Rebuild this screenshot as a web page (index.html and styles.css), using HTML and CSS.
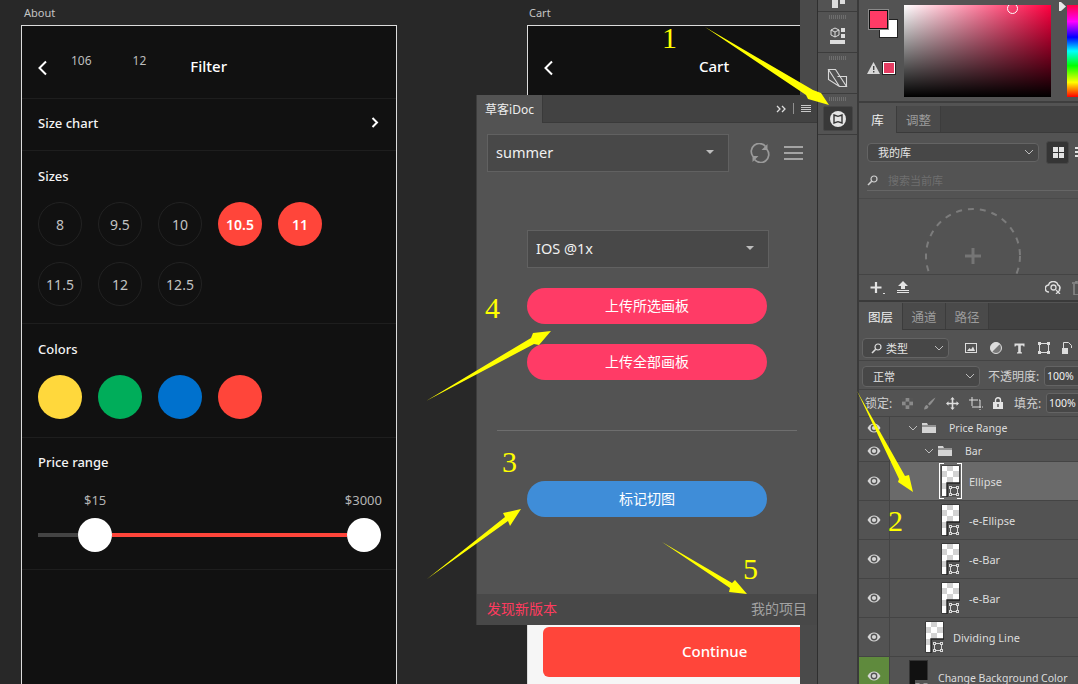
FILE: index.html
```html
<!DOCTYPE html>
<html lang="zh-CN">
<head>
  <meta charset="UTF-8">
  <title>草客iDoc</title>
  <link rel="stylesheet" href="styles.css">
</head>
<body>
  <svg class="defs" width="0" height="0">
    <symbol id="thumb" viewBox="0 0 19 32">
      <rect x="0.5" y="0.5" width="18" height="31" fill="#222"/>
      <rect x="1" y="1" width="17" height="30" fill="#fff"/>
      <g fill="#d2d2d2">
        <rect x="6" y="1" width="6" height="5"/><rect x="12" y="6" width="6" height="6"/>
        <rect x="1" y="6" width="5" height="6"/><rect x="6" y="12" width="6" height="6"/>
        <rect x="1" y="18" width="5" height="6"/>
      </g>
      <rect x="6" y="18" width="13" height="14" fill="#535353"/>
      <path d="M6 32V18h13" fill="none" stroke="#222" stroke-width="1.4"/>
      <rect x="9.5" y="22.5" width="7" height="7" fill="none" stroke="#d8d8d8"/>
      <g fill="#535353" stroke="#d8d8d8">
        <rect x="8.5" y="21.5" width="2" height="2"/><rect x="15.5" y="21.5" width="2" height="2"/>
        <rect x="8.5" y="28.5" width="2" height="2"/><rect x="15.5" y="28.5" width="2" height="2"/>
      </g>
    </symbol>
    <symbol id="eye" viewBox="0 0 14 10">
      <path d="M0.5 5C2.5 1.8 4.6 0.6 7 0.6S11.5 1.8 13.5 5C11.5 8.2 9.4 9.4 7 9.4S2.5 8.2 0.5 5Z" fill="#d6d6d6"/>
      <circle cx="7" cy="5" r="3.4" fill="#535353"/>
      <circle cx="7" cy="5" r="2.1" fill="#d6d6d6"/>
    </symbol>
    <symbol id="folder" viewBox="0 0 14 10">
      <path d="M0 0h5l1 2h8v8H0Z" fill="#d4d4d4"/>
      <rect x="0" y="2.5" width="14" height="1" fill="#535353"/>
    </symbol>
    <symbol id="vee" viewBox="0 0 10 6">
      <path d="M1 1l4 4 4-4" fill="none" stroke="#bdbdbd"/>
    </symbol>
  </svg>

  <div class="app">
    <main class="canvas">
      <div class="board-label label-about">About</div>
      <section class="board board-filter">
        <header class="filter-head">
          <svg class="back" width="11" height="16" viewBox="0 0 11 16"><path d="M9 1.5L2.5 8 9 14.5" fill="none" stroke="#fff" stroke-width="2"/></svg>
          <span class="measure measure-w">106</span>
          <span class="measure measure-h">12</span>
          <span class="head-title">Filter</span>
        </header>
        <div class="row-chart">
          <span class="sec-title">Size chart</span>
          <svg width="8" height="11" viewBox="0 0 8 11"><path d="M1.5 1L6 5.5 1.5 10" fill="none" stroke="#fff" stroke-width="2"/></svg>
        </div>
        <div class="sec sec-sizes">
          <div class="sec-title">Sizes</div>
          <div class="size-grid">
            <span class="size">8</span>
            <span class="size">9.5</span>
            <span class="size">10</span>
            <span class="size on">10.5</span>
            <span class="size on">11</span>
            <span class="size">11.5</span>
            <span class="size">12</span>
            <span class="size">12.5</span>
          </div>
        </div>
        <div class="sec sec-colors">
          <div class="sec-title">Colors</div>
          <div class="color-row">
            <span class="dot dot-yellow"></span>
            <span class="dot dot-green"></span>
            <span class="dot dot-blue"></span>
            <span class="dot dot-red"></span>
          </div>
        </div>
        <div class="sec sec-price">
          <div class="sec-title">Price range</div>
          <div class="price-labels"><span>$15</span><span>$3000</span></div>
          <div class="slider">
            <i class="track-off"></i>
            <b class="thumb"></b>
            <i class="track-on"></i>
            <b class="thumb"></b>
          </div>
        </div>
      </section>

      <div class="board-label label-cart">Cart</div>
      <section class="board board-cart">
        <header class="cart-head">
          <svg class="back" width="11" height="16" viewBox="0 0 11 16"><path d="M9 1.5L2.5 8 9 14.5" fill="none" stroke="#fff" stroke-width="2"/></svg>
          <span class="cart-title">Cart</span>
        </header>
        <footer class="cart-foot"><div class="continue"><span>Continue</span></div></footer>
      </section>
    </main>

    <div class="gutter"></div>

    <aside class="dock">
      <div class="dock-cell dock-a">
        <svg width="16" height="9" viewBox="0 0 16 9"><rect x="2" width="6" height="8" fill="#ddd"/><rect x="10" width="5" height="4" fill="#ddd"/></svg>
      </div>
      <div class="dock-cell">
        <i class="grip"></i>
        <svg width="16" height="17" viewBox="0 0 16 17">
          <path d="M5 1l4 2v5l-4 2-4-2V3Z" fill="none" stroke="#ddd"/><path d="M1 3l4 2 4-2M5 5v5" fill="none" stroke="#ddd"/>
          <rect x="11" y="1" width="4" height="4" fill="#ddd"/><rect x="11" y="7" width="4" height="4" fill="#ddd"/>
          <rect x="0" y="13" width="15" height="4" fill="#ddd"/>
        </svg>
      </div>
      <div class="dock-cell">
        <i class="grip"></i>
        <svg width="21" height="20" viewBox="0 0 21 20"><path d="M1.5 1.5h7l11 17h-7ZM1.5 1.5v10l11 7M10.5 8.5h9v10" fill="none" stroke="#d8d8d8" stroke-width="1.1"/></svg>
      </div>
      <div class="dock-cell dock-active">
        <i class="grip"></i>
        <div class="idoc-btn">
          <svg width="16" height="16" viewBox="0 0 16 16"><circle cx="8" cy="8" r="8" fill="#e4e4e4"/><path d="M4 4l4 1.3L12 4v8l-4-1.3L4 12Z" fill="none" stroke="#333" stroke-width="1.4"/></svg>
        </div>
      </div>
    </aside>

    <div class="panels">
      <section class="color-panel">
        <div class="swatches">
          <i class="swatch-bg"></i>
          <i class="swatch-fg"></i>
          <svg class="warn" width="13" height="12" viewBox="0 0 13 12"><path d="M6.5 0L13 12H0Z" fill="#d8d8d8"/><rect x="6" y="4" width="1.4" height="4" fill="#444"/><rect x="6" y="9" width="1.4" height="1.5" fill="#444"/></svg>
          <i class="swatch-web"></i>
        </div>
        <div class="picker"><i class="picker-ring"></i></div>
        <div class="hue-wrap">
          <svg class="hue-arrow" width="7" height="9" viewBox="0 0 7 9"><path d="M0 0h2l5 4.5L2 9H0Z" fill="#e8e8e8"/></svg>
          <div class="hue"></div>
        </div>
      </section>

      <section class="lib-panel">
        <div class="tabs">
          <span class="tab tab-on">库</span>
          <span class="tab tab-w">调整</span>
        </div>
        <div class="lib-tools">
          <div class="ps-select lib-select"><span>我的库</span><svg width="10" height="6"><use href="#vee"/></svg></div>
          <div class="grid-btn"><i></i><i></i><i></i><i></i></div>
          <div class="list-btn"><i></i><i></i><i></i></div>
        </div>
        <div class="lib-search">
          <svg width="11" height="11" viewBox="0 0 11 11"><circle cx="7" cy="4" r="3" fill="none" stroke="#cfcfcf" stroke-width="1.2"/><path d="M4.7 6.3L1 10" stroke="#cfcfcf" stroke-width="1.6"/></svg>
          <span>搜索当前库</span>
        </div>
        <div class="lib-empty">
          <svg width="100" height="67" viewBox="0 0 100 67">
            <circle cx="50" cy="49" r="47" fill="none" stroke="#7c7c7c" stroke-width="2" stroke-dasharray="6 6"/>
            <path d="M50 41v16M42 49h16" stroke="#757575" stroke-width="3"/>
          </svg>
        </div>
        <div class="lib-foot">
          <svg width="16" height="14" viewBox="0 0 16 14"><path d="M6 1v11M0.5 6.5h11" stroke="#e4e4e4" stroke-width="2.2"/><rect x="13" y="12" width="2" height="1" fill="#ddd"/></svg>
          <svg width="14" height="13" viewBox="0 0 14 13"><path d="M7 0l5 5H9v3H5V5H2Z" fill="#e4e4e4"/><rect x="1" y="9" width="12" height="1" fill="#e4e4e4"/><rect x="1" y="11" width="12" height="1" fill="#e4e4e4"/></svg>
          <span class="spacer"></span>
          <svg width="17" height="13" viewBox="0 0 17 13"><path d="M4 11a3.5 3.5 0 0 1-.5-7A5 5 0 0 1 13 4a3 3 0 0 1 1 5" fill="none" stroke="#ddd" stroke-width="1.6"/><circle cx="8.5" cy="6.5" r="2.5" fill="none" stroke="#ddd" stroke-width="1.3"/><path d="M11 9l4 4M15 9l-4 4" stroke="#ddd" stroke-width="1.3"/></svg>
          <svg class="trash" width="13" height="14" viewBox="0 0 13 14"><path d="M0 2h13M4 2V0h5v2M2 3v11h9V3" fill="none" stroke="#8a8a8a" stroke-width="1.5"/></svg>
        </div>
      </section>

      <section class="layer-panel">
        <div class="tabs">
          <span class="tab tab-on tab-l">图层</span>
          <span class="tab tab-l2">通道</span>
          <span class="tab tab-l2">路径</span>
        </div>
        <div class="layer-tools tools-filter">
          <div class="ps-select filter-select">
            <svg width="11" height="11" viewBox="0 0 11 11"><circle cx="7" cy="4" r="3" fill="none" stroke="#dcdcdc" stroke-width="1.2"/><path d="M4.7 6.3L1 10" stroke="#dcdcdc" stroke-width="1.6"/></svg>
            <span>类型</span>
            <svg class="push" width="10" height="6"><use href="#vee"/></svg>
          </div>
          <div class="filter-icons">
            <svg width="12" height="10" viewBox="0 0 12 10"><rect x="0.5" y="0.5" width="11" height="9" fill="none" stroke="#ddd"/><path d="M2 8l2.5-3 1.5 1.5 2-3 2 4.5Z" fill="#ddd"/></svg>
            <svg width="12" height="12" viewBox="0 0 12 12"><circle cx="6" cy="6" r="5.5" fill="#777" stroke="#ddd"/><path d="M10 2L2 10A5.5 5.500 0 0 1 10 2Z" fill="#ddd"/></svg>
            <svg width="11" height="11" viewBox="0 0 11 11"><path d="M0.5 0.5h10v3h-1l-.5-1H6.8v6.5l1.2.5v1H3v-1l1.2-.5V2.5H2l-.5 1h-1Z" fill="#ddd"/></svg>
            <svg width="12" height="12" viewBox="0 0 12 12"><path d="M1.5 1.5h9v9h-9Z" fill="none" stroke="#ddd"/><g fill="#ddd"><rect width="3" height="3"/><rect x="9" width="3" height="3"/><rect y="9" width="3" height="3"/><rect x="9" y="9" width="3" height="3"/></g></svg>
            <svg width="11" height="12" viewBox="0 0 11 12"><path d="M1.5 11V.5h5l3 3V6" fill="none" stroke="#ddd"/><rect x="0" y="6" width="6" height="6" fill="#ddd"/></svg>
          </div>
        </div>
        <div class="layer-tools tools-blend">
          <div class="ps-select blend-select"><span>正常</span><svg class="push" width="10" height="6"><use href="#vee"/></svg></div>
          <span class="tool-label opacity-label">不透明度:</span>
          <span class="pct">100%</span>
        </div>
        <div class="layer-tools tools-lock">
          <span class="tool-label lock-label">锁定:</span>
          <div class="lock-icons">
            <svg width="11" height="11" viewBox="0 0 11 11"><rect width="11" height="11" fill="#8a8a8a"/><g fill="#555"><rect x="0" y="0" width="3.6" height="3.6"/><rect x="7.3" y="0" width="3.7" height="3.6"/><rect x="3.6" y="3.6" width="3.7" height="3.7"/><rect x="0" y="7.3" width="3.6" height="3.7"/><rect x="7.3" y="7.3" width="3.7" height="3.7"/></g></svg>
            <svg width="13" height="13" viewBox="0 0 13 13"><path d="M12.5.5C10 2 6.5 5 5 7l1.500 1.500C8.500 7 11 3.500 12.500.5ZM4 8C2.500 8 1.500 9.500 1 12.500 3 12.500 5.500 11.500 5.500 9.500Z" fill="#8f8f8f"/></svg>
            <svg width="13" height="13" viewBox="0 0 13 13"><path d="M6.5 0l2.2 2.5H7.3v3.2h3.200V4.300L13 6.500l-2.500 2.200V7.300H7.300v3.200h1.400L6.500 13l-2.200-2.500h1.400V7.300H2.500v1.400L0 6.500l2.500-2.200v1.400h3.200V2.500H4.300Z" fill="#ddd"/></svg>
            <svg width="14" height="13" viewBox="0 0 14 13"><path d="M3 0v10h11M0 3h11v10" fill="none" stroke="#ddd" stroke-dasharray="9 1"/></svg>
            <svg width="10" height="12" viewBox="0 0 10 12"><path d="M2.5 5V3.2a2.5 2.5 0 0 1 5 0V5" fill="none" stroke="#e4e4e4" stroke-width="1.4"/><rect y="5" width="10" height="7" fill="#e4e4e4"/><rect x="4.3" y="7" width="1.4" height="3" fill="#535353"/></svg>
          </div>
          <span class="tool-label fill-label">填充:</span>
          <span class="pct">100%</span>
        </div>

        <div class="layers">
          <div class="layer layer-s">
            <span class="eye-col"><svg width="14" height="10"><use href="#eye"/></svg></span>
            <span class="layer-main ind-1"><svg class="twist" width="10" height="6"><use href="#vee"/></svg><svg width="14" height="10"><use href="#folder"/></svg><span class="layer-name">Price Range</span></span>
          </div>
          <div class="layer layer-s layer-s2">
            <span class="eye-col"><svg width="14" height="10"><use href="#eye"/></svg></span>
            <span class="layer-main ind-2"><svg class="twist" width="10" height="6"><use href="#vee"/></svg><svg width="14" height="10"><use href="#folder"/></svg><span class="layer-name">Bar</span></span>
          </div>
          <div class="layer layer-on">
            <span class="eye-col"><svg width="14" height="10"><use href="#eye"/></svg></span>
            <span class="layer-main ind-3"><span class="thumb-sel"><svg width="19" height="32"><use href="#thumb"/></svg></span><span class="layer-name">Ellipse</span></span>
          </div>
          <div class="layer">
            <span class="eye-col"><svg width="14" height="10"><use href="#eye"/></svg></span>
            <span class="layer-main ind-3"><svg width="19" height="32"><use href="#thumb"/></svg><span class="layer-name">-e-Ellipse</span></span>
          </div>
          <div class="layer">
            <span class="eye-col"><svg width="14" height="10"><use href="#eye"/></svg></span>
            <span class="layer-main ind-3"><svg width="19" height="32"><use href="#thumb"/></svg><span class="layer-name">-e-Bar</span></span>
          </div>
          <div class="layer">
            <span class="eye-col"><svg width="14" height="10"><use href="#eye"/></svg></span>
            <span class="layer-main ind-3"><svg width="19" height="32"><use href="#thumb"/></svg><span class="layer-name">-e-Bar</span></span>
          </div>
          <div class="layer">
            <span class="eye-col"><svg width="14" height="10"><use href="#eye"/></svg></span>
            <span class="layer-main ind-4"><svg width="19" height="32"><use href="#thumb"/></svg><span class="layer-name">Dividing Line</span></span>
          </div>
          <div class="layer">
            <span class="eye-col eye-green"><svg width="14" height="10"><use href="#eye"/></svg></span>
            <span class="layer-main ind-5">
              <svg width="19" height="32" viewBox="0 0 19 32"><rect x="0.5" y="0.5" width="18" height="31" fill="#111" stroke="#333"/><rect x="6" y="20" width="13" height="12" fill="#535353"/><path d="M9 26h8" stroke="#ddd"/><rect x="7" y="24" width="3" height="3" fill="#535353" stroke="#ddd"/><rect x="15" y="24" width="3" height="3" fill="#535353" stroke="#ddd"/></svg>
              <span class="layer-name layer-name-bg">Change Background Color</span>
            </span>
          </div>
        </div>
      </section>
    </div>

    <section class="idoc">
      <div class="idoc-tabs">
        <span class="idoc-tab">草客iDoc</span>
        <span class="idoc-more">
          <svg width="10" height="8" viewBox="0 0 10 8"><path d="M1 1l3 3-3 3M6 1l3 3-3 3" fill="none" stroke="#dcdcdc" stroke-width="1.3"/></svg>
          <i class="idoc-sep"></i>
          <svg width="10" height="7" viewBox="0 0 10 7"><path d="M0 .5h10M0 2.5h10M0 4.5h10M0 6.5h10" stroke="#c8c8c8"/></svg>
        </span>
      </div>
      <div class="idoc-body">
        <div class="idoc-top">
          <div class="idoc-select select-project"><span>summer</span><i class="caret"></i></div>
          <svg class="sync" width="20" height="20" viewBox="0 0 20 20"><path d="M3 13.5A8 8 0 0 1 15.5 3.5M17 6.5A8 8 0 0 1 4.5 16.5" fill="none" stroke="#9a9a9a" stroke-width="1.7"/><path d="M17.5 1v6h-6ZM2.5 19v-6h6Z" fill="#9a9a9a"/></svg>
          <svg class="menu" width="19" height="14" viewBox="0 0 19 14"><path d="M0 1h19M0 7h19M0 13h19" stroke="#a4a4a4" stroke-width="2"/></svg>
        </div>
        <div class="idoc-select select-scale"><span>IOS @1x</span><i class="caret"></i></div>
        <div class="pill pill-red">上传所选画板</div>
        <div class="pill pill-red pill-second">上传全部画板</div>
        <hr class="idoc-rule">
        <div class="pill pill-blue">标记切图</div>
      </div>
      <div class="idoc-foot">
        <span class="new-ver">发现新版本</span>
        <span class="my-proj">我的项目</span>
      </div>
    </section>

    <svg class="notes" width="1078" height="684" viewBox="0 0 1078 684">
      <g fill="#ffff00">
        <polygon points="705,27 813,90 821,93 829,105 808,99 806,95"/>
        <polygon points="426,401 531,338 533,333 551,331 539,345 534,344"/>
        <polygon points="427,579 505,517 503,513 521,509 510,526 508,521"/>
        <polygon points="662,542 732,583 735,580 747,594 729,592 730,588"/>
        <polygon points="857,391 905,476 909,475 913,492 898,482 899,479"/>
      </g>
      <g class="note-num">
        <text x="662" y="48">1</text>
        <text x="485" y="318">4</text>
        <text x="502" y="472">3</text>
        <text x="743" y="579">5</text>
        <text x="888" y="531">2</text>
      </g>
    </svg>
  </div>
</body>
</html>
```
FILE: styles.css
```css
body {
  margin: 0;
  background: #282828;
  font-family: "Noto Sans", "Noto Sans CJK SC", sans-serif;
}
.defs {
  position: absolute;
}
.app {
  position: relative;
  display: flex;
  width: 1078px;
  height: 684px;
  overflow: hidden;
}

/* canvas with artboards */
.canvas {
  position: relative;
  flex: none;
  width: 800px;
  height: 684px;
  overflow: hidden;
  background: #282828;
}
.board-label {
  position: absolute;
  top: 5px;
  font-size: 11px;
  line-height: 16px;
  color: #c4c4c4;
}
.label-about {
  left: 24px;
}
.label-cart {
  left: 529px;
}
.board {
  position: absolute;
  top: 25px;
  box-sizing: border-box;
  border: 1px solid #dcdcdc;
  background: #111;
}
.board-filter {
  left: 21px;
  width: 376px;
  height: 700px;
  color: #fff;
}
.filter-head {
  display: flex;
  align-items: center;
  box-sizing: content-box;
  height: 61px;
  padding: 11px 0 0 15px;
  border-bottom: 1px solid #1e1e1e;
}
.back {
  flex: none;
}
.measure {
  align-self: flex-start;
  margin-top: 16px;
  font-size: 12px;
  line-height: 16px;
  color: #bdbdbd;
}
.measure-w {
  margin-left: 23px;
}
.measure-h {
  margin-left: 41px;
}
.head-title {
  margin: -3px 0 0 44px;
  font-size: 15px;
  font-weight: 500;
}
.row-chart {
  display: flex;
  align-items: center;
  justify-content: space-between;
  box-sizing: border-box;
  height: 52px;
  padding: 0 17px 4px 16px;
  border-bottom: 1px solid #1e1e1e;
}
.sec {
  padding: 0 16px;
  border-bottom: 1px solid #1e1e1e;
}
.sec-title {
  font-size: 13px;
  line-height: 18px;
  font-weight: 500;
  color: #f4f4f4;
}
.sec-sizes {
  height: 173px;
  box-sizing: border-box;
  padding-top: 16px;
}
.size-grid {
  display: grid;
  grid-template-columns: repeat(5, 44px);
  gap: 16px;
  margin-top: 17px;
}
.size {
  display: flex;
  align-items: center;
  justify-content: center;
  box-sizing: border-box;
  width: 44px;
  height: 44px;
  border: 1px solid #222;
  border-radius: 50%;
  font-size: 14px;
  color: #c2c2c2;
}
.size.on {
  border: none;
  background: #ff453a;
  color: #fff;
  font-weight: 600;
}
.sec-colors {
  height: 114px;
  box-sizing: border-box;
  padding-top: 16px;
}
.color-row {
  display: flex;
  gap: 16px;
  margin-top: 17px;
}
.dot {
  width: 44px;
  height: 44px;
  border-radius: 50%;
}
.dot-yellow {
  background: #ffd83c;
}
.dot-green {
  background: #00ad5a;
}
.dot-blue {
  background: #0071cd;
}
.dot-red {
  background: #ff453a;
}
.sec-price {
  height: 132px;
  box-sizing: border-box;
  padding-top: 15px;
}
.price-labels {
  display: flex;
  justify-content: space-between;
  margin-top: 20px;
  padding: 0 0 0 46px;
  width: 344px;
  box-sizing: border-box;
  font-size: 13px;
  line-height: 18px;
  color: #b4b4b4;
}
.slider {
  display: flex;
  align-items: center;
  width: 343px;
  margin-top: 9px;
}
.slider i {
  height: 4px;
}
.track-off {
  width: 40px;
  background: #444;
}
.track-on {
  flex: 1;
  background: #ff453a;
}
.thumb {
  flex: none;
  width: 34px;
  height: 34px;
  border-radius: 50%;
  background: #fff;
}

.board-cart {
  left: 527px;
  display: flex;
  flex-direction: column;
  width: 380px;
  height: 660px;
  color: #fff;
}
.cart-head {
  display: flex;
  flex: 1;
  align-items: flex-start;
  padding: 34px 0 0 15px;
}
.cart-title {
  margin: -4px 0 0 145px;
  font-size: 15px;
  font-weight: 500;
}
.cart-foot {
  box-sizing: border-box;
  height: 60px;
  padding: 3px 15px 0;
  background: #f6f6f6;
}
.continue {
  display: flex;
  align-items: center;
  box-sizing: border-box;
  height: 50px;
  padding-bottom: 3px;
  border-radius: 6px;
  background: #ff453a;
  font-size: 15px;
  font-weight: 500;
}
.continue span {
  margin-left: 139px;
}

/* strip between canvas and the dock */
.gutter {
  flex: none;
  width: 17px;
  background: #4a4a4a;
  border-right: 1px solid #2f2f2f;
}
.dock {
  flex: none;
  width: 39px;
  background: #535353;
  border-right: 2px solid #3a3a3a;
}
.dock-cell {
  display: flex;
  flex-direction: column;
  align-items: center;
  height: 40px;
  border-bottom: 1px solid #3c3c3c;
}
.dock-a {
  height: 11px;
}
.grip {
  width: 18px;
  height: 4px;
  margin: 3px 0 8px;
  background: repeating-linear-gradient(90deg, #6e6e6e 0 1px, transparent 1px 2px);
}
.dock-active .grip {
  margin-bottom: 5px;
}
.idoc-btn {
  display: flex;
  align-items: center;
  justify-content: center;
  width: 28px;
  height: 23px;
  border-radius: 2px;
  border: 1px solid #464646;
  background: #383838;
}

/* photoshop side panels */
.panels {
  display: flex;
  flex: none;
  flex-direction: column;
  width: 219px;
  background: #535353;
  color: #dcdcdc;
  font-size: 11px;
}
.color-panel {
  display: flex;
  flex: none;
  height: 103px;
  box-sizing: border-box;
  border-bottom: 2px solid #3e3e3e;
  padding-top: 5px;
}
.swatches {
  position: relative;
  flex: none;
  width: 45px;
}
.swatch-fg,
.swatch-bg,
.swatch-web,
.warn {
  position: absolute;
}
.swatch-bg {
  left: 20px;
  top: 14px;
  width: 17px;
  height: 17px;
  border: 1px solid #222;
  background: #fff;
}
.swatch-fg {
  left: 10px;
  top: 5px;
  width: 17px;
  height: 17px;
  border: 1px solid #111;
  outline: 1px solid #8a8a8a;
  background: #ff3b66;
}
.warn {
  left: 8px;
  top: 57px;
}
.swatch-web {
  left: 24px;
  top: 57px;
  width: 10px;
  height: 10px;
  border: 1px solid #fff;
  outline: 1px solid #222;
  background: #e63c62;
}
.picker {
  position: relative;
  flex: none;
  width: 147px;
  height: 92px;
  overflow: hidden;
  background: linear-gradient(to bottom, transparent, #000), linear-gradient(to right, #fff, #ff0040);
}
.picker-ring {
  position: absolute;
  left: 103px;
  top: -2px;
  width: 9px;
  height: 9px;
  border: 1px solid #fff;
  border-radius: 50%;
}
.hue-wrap {
  display: flex;
  align-items: flex-start;
  margin-left: 8px;
}
.hue-arrow {
  margin-top: -3px;
}
.hue {
  width: 11px;
  height: 92px;
  margin-left: 1px;
  background: linear-gradient(to bottom, #ff0040, #ff00ff 18%, #0000ff 35%, #00ffff 50%, #00ff00 66%, #ffff00 84%, #ff0000);
}
.lib-panel {
  flex: none;
  height: 196px;
  margin-top: 3px;
  box-sizing: border-box;
  border-bottom: 2px solid #3a3a3a;
  display: flex;
  flex-direction: column;
}
.tabs {
  display: flex;
  flex: none;
  height: 27px;
  background: #424242;
  border-bottom: 1px solid #3a3a3a;
  box-sizing: border-box;
}
.tab {
  display: flex;
  align-items: center;
  justify-content: center;
  width: 38px;
  color: #9c9c9c;
  font-size: 12.5px;
  background: #4a4a4a;
  border-right: 1px solid #3c3c3c;
  box-sizing: border-box;
}
.tab-on {
  height: 27px;
  background: #535353;
  color: #efefef;
}
.tab-w {
  width: 44px;
}
.tab-l {
  width: 44px;
}
.tab-l2 {
  width: 43px;
}
.lib-tools {
  display: flex;
  align-items: center;
  height: 24px;
  margin-top: 7px;
  padding-left: 8px;
}
.ps-select {
  display: flex;
  align-items: center;
  box-sizing: border-box;
  height: 19px;
  border: 1px solid #646464;
  border-radius: 4px;
  background: #474747;
  color: #e4e4e4;
  padding: 0 4px 0 10px;
}
.lib-select {
  justify-content: space-between;
  width: 172px;
}
.grid-btn {
  display: grid;
  grid-template-columns: 5px 5px;
  grid-auto-rows: 5px;
  gap: 1px;
  box-sizing: border-box;
  width: 23px;
  height: 23px;
  margin-left: 7px;
  padding: 5px 6px;
  border-radius: 3px;
  border: 1px solid #474747;
  background: #353535;
}
.grid-btn i {
  background: #e4e4e4;
}
.list-btn {
  display: flex;
  flex-direction: column;
  gap: 2px;
  margin-left: 6px;
}
.list-btn i {
  width: 3px;
  height: 2px;
  background: #e4e4e4;
}
.lib-search {
  display: flex;
  align-items: center;
  gap: 10px;
  height: 20px;
  margin: 6px 0 0 8px;
  border-bottom: 1px solid #666;
  color: #6f6f6f;
}
.lib-empty {
  display: flex;
  flex: 1;
  justify-content: center;
  align-items: flex-end;
  margin-top: 7px;
  padding-left: 9px;
  border-top: 1px solid #4a4a4a;
  overflow: hidden;
}
.lib-foot {
  display: flex;
  flex: none;
  align-items: center;
  gap: 10px;
  height: 25px;
  padding-left: 11px;
  border-top: 1px solid #444;
}
.spacer {
  flex: 1;
}
.trash {
  margin-right: -7px;
  flex: none;
}
.layer-panel {
  display: flex;
  flex: 1;
  flex-direction: column;
  margin-top: 1px;
  min-height: 0;
}
.layer-tools {
  display: flex;
  align-items: center;
  flex: none;
  padding-left: 3px;
  border-bottom: 1px solid #444;
  box-sizing: border-box;
}
.tools-filter {
  height: 31px;
  padding-top: 7px;
  padding-bottom: 1px;
}
.tools-blend {
  height: 29px;
  padding-top: 2px;
}
.tools-lock {
  height: 27px;
  padding-left: 6px;
}
.filter-select {
  flex: none;
  width: 87px;
  height: 20px;
  padding-left: 8px;
  gap: 4px;
}
.push {
  margin-left: auto;
}
.filter-icons {
  display: flex;
  align-items: center;
  gap: 12.5px;
  margin-left: 16px;
}
.filter-icons svg {
  flex: none;
}
.blend-select {
  flex: none;
  width: 118px;
  height: 21px;
}
.tool-label {
  color: #d0d0d0;
  font-size: 12px;
  white-space: nowrap;
}
.opacity-label {
  margin-left: 8px;
  width: 56px;
  flex: none;
}
.lock-label {
  flex: none;
  width: 37px;
}
.fill-label {
  flex: none;
  width: 32px;
  margin-left: 11px;
}
.lock-icons {
  display: flex;
  align-items: center;
  gap: 10px;
  flex: none;
}
.pct {
  flex: none;
  box-sizing: border-box;
  width: 40px;
  height: 20px;
  line-height: 18px;
  padding-left: 2px;
  border: 1px solid #646464;
  border-radius: 3px;
  background: #474747;
  color: #f0f0f0;
  font-size: 10.5px;
}
.layers {
  flex: 1;
  min-height: 0;
  overflow: hidden;
}
.layer {
  display: flex;
  height: 39px;
  box-sizing: border-box;
  border-bottom: 1px solid #444;
}
.layer-s {
  height: 23px;
}
.layer-s2 {
  height: 22px;
}
.layer-on .layer-main {
  background: #6a6a6a;
}
.eye-col {
  display: flex;
  flex: none;
  align-items: center;
  justify-content: center;
  width: 30px;
  border-right: 1px solid #444;
}
.eye-green {
  background: #5f8a3d;
}
.layer-main {
  display: flex;
  flex: 1;
  align-items: center;
  gap: 9px;
  min-width: 0;
}
.layer-s .layer-main {
  gap: 4px;
}
.ind-1 {
  padding-left: 18px;
}
.ind-2 {
  padding-left: 34px;
}
.ind-3 {
  padding-left: 51px;
}
.ind-4 {
  padding-left: 35px;
}
.ind-5 {
  padding-left: 19px;
}
.layer-name {
  white-space: nowrap;
  font-size: 11px;
  color: #dcdcdc;
}
.layer-s .layer-name {
  font-size: 10.5px;
  margin-left: 9px;
}
.layer-name-bg {
  margin: 4px 0 0 1px;
  font-size: 10.5px;
}
.thumb-sel {
  display: flex;
  padding: 2px;
  margin: -2px;
  background:
    linear-gradient(#fff, #fff) 0 0 / 5px 1px no-repeat,
    linear-gradient(#fff, #fff) 100% 0 / 5px 1px no-repeat,
    linear-gradient(#fff, #fff) 0 100% / 5px 1px no-repeat,
    linear-gradient(#fff, #fff) 100% 100% / 5px 1px no-repeat,
    linear-gradient(#fff, #fff) 0 0 / 1px 36px no-repeat,
    linear-gradient(#fff, #fff) 100% 0 / 1px 36px no-repeat;
}

/* floating iDoc panel */
.idoc {
  position: absolute;
  left: 476px;
  top: 95px;
  display: flex;
  flex-direction: column;
  width: 341px;
  height: 530px;
  background: #535353;
  border-left: 1px solid #3c3c3c;
  box-sizing: border-box;
}
.idoc-tabs {
  display: flex;
  flex: none;
  justify-content: space-between;
  height: 28px;
  box-sizing: border-box;
  background: #424242;
  border-bottom: 1px solid #3a3a3a;
}
.idoc-tab {
  display: flex;
  align-items: center;
  justify-content: center;
  box-sizing: border-box;
  width: 66px;
  height: 28px;
  background: #535353;
  border-right: 1px solid #3a3a3a;
  color: #eee;
  font-size: 12px;
}
.idoc-more {
  display: flex;
  align-items: center;
  gap: 7px;
  padding-right: 6px;
}
.idoc-sep {
  width: 1px;
  height: 11px;
  background: #909090;
}
.idoc-body {
  display: flex;
  flex: 1;
  flex-direction: column;
  padding: 11px 0 0 10px;
  background: #535353;
}
.idoc-top {
  display: flex;
  align-items: center;
}
.idoc-select {
  display: flex;
  flex: none;
  align-items: center;
  justify-content: space-between;
  box-sizing: border-box;
  width: 242px;
  height: 38px;
  padding: 0 14px 2px 8px;
  border: 1px solid #616161;
  background: #484848;
  color: #f0f0f0;
  font-size: 14.5px;
}
.caret {
  width: 0;
  height: 0;
  border-left: 4px solid transparent;
  border-right: 4px solid transparent;
  border-top: 4px solid #bdbdbd;
}
.sync {
  margin-left: 21px;
}
.menu {
  margin-left: 14px;
}
.select-scale {
  margin: 58px 0 0 40px;
}
.pill {
  display: flex;
  align-items: center;
  justify-content: center;
  box-sizing: border-box;
  width: 240px;
  height: 36px;
  margin-left: 40px;
  padding-bottom: 3px;
  border-radius: 18px;
  color: #fff;
  font-size: 14px;
}
.pill-red {
  margin-top: 20px;
  background: #ff3b66;
}
.pill-blue {
  margin-top: 50px;
  background: #3f8dd8;
}
.idoc-rule {
  width: 300px;
  height: 1px;
  margin: 50px 0 0 10px;
  border: none;
  background: #6e6e6e;
}
.idoc-foot {
  display: flex;
  flex: none;
  align-items: center;
  justify-content: space-between;
  box-sizing: border-box;
  height: 31px;
  padding: 0 10px 3px;
  background: #484848;
  font-size: 14px;
}
.new-ver {
  color: #ff3b5f;
}
.my-proj {
  color: #a2a2a2;
}

/* annotations drawn over the screenshot */
.notes {
  position: absolute;
  left: 0;
  top: 0;
  pointer-events: none;
}
.note-num text {
  fill: #ffff00;
  font-family: "Liberation Serif", serif;
  font-size: 30px;
}
```
